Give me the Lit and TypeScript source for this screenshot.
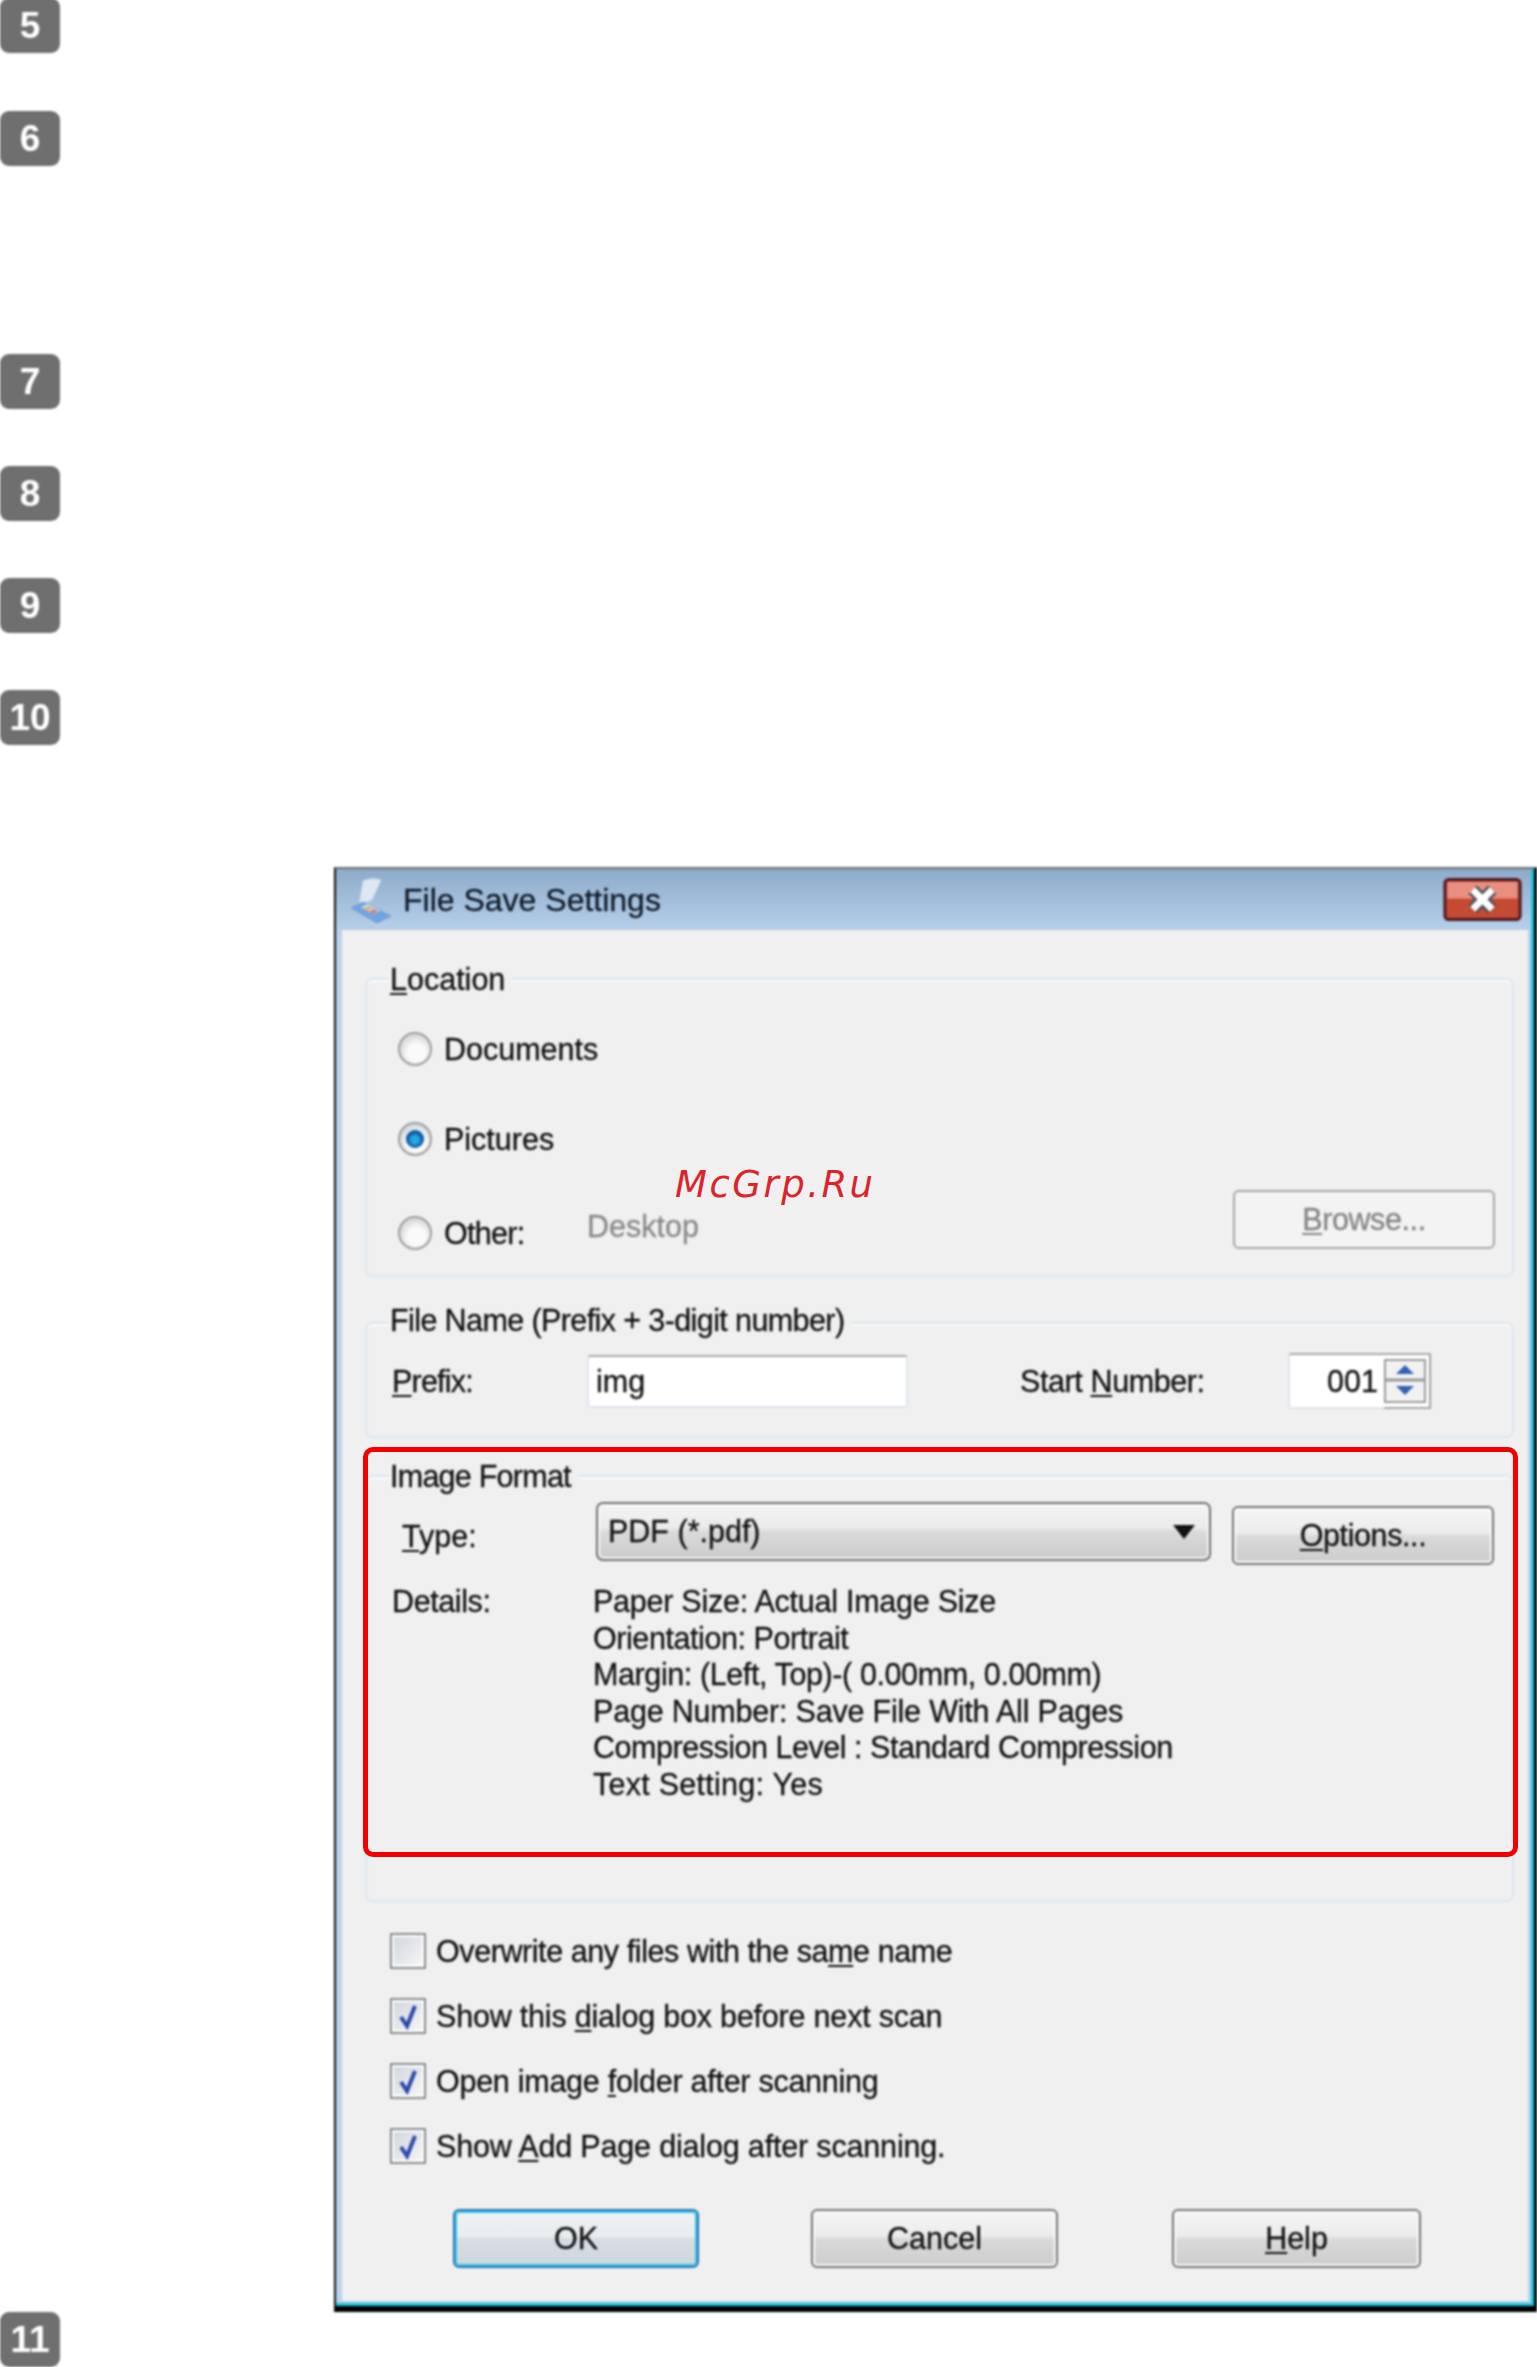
import { LitElement, html, css, svg } from "lit";
import { customElement } from "lit/decorators.js";

const TOP_STEPS = [
  { n: "5", gap: 0 },
  { n: "6", gap: 58 },
  { n: "7", gap: 188 },
  { n: "8", gap: 57 },
  { n: "9", gap: 57 },
  { n: "10", gap: 57 },
];

const DETAILS = [
  { t: "Paper Size: Actual Image Size", ls: -0.25 },
  { t: "Orientation: Portrait", ls: -0.43 },
  { t: "Margin: (Left, Top)-( 0.00mm, 0.00mm)", ls: -0.4 },
  { t: "Page Number: Save File With All Pages", ls: -0.2 },
  { t: "Compression Level : Standard Compression", ls: -0.47 },
  { t: "Text Setting: Yes", ls: 0.26 },
];

@customElement("app-root")
export class AppRoot extends LitElement {
  static styles = css`
    :host {
      display: block;
      width: 1537px;
      height: 2367px;
      overflow: hidden;
      background: #fff;
      font-family: "Liberation Sans", Arial, sans-serif;
      font-size: 30.5px;
      color: #111;
    }
    .page { display: flex; flex-direction: column; margin-top: -2px; }
    .badge {
      width: 60px;
      height: 55px;
      flex: none;
      box-sizing: border-box;
      background: #6f6f6f;
      border-radius: 9px;
      display: flex;
      align-items: center;
      justify-content: center;
      color: #fff;
      font: bold 37px/1 "Liberation Sans", Arial, sans-serif;
      filter: blur(0.8px);
    }
    .wrap {
      position: relative;
      margin: 122px 0 0 334px;
      width: 1203px;
      height: 1445px;
      flex: none;
    }
    .dialog {
      box-sizing: border-box;
      width: 100%;
      height: 100%;
      display: flex;
      flex-direction: column;
      border-top: 2px solid #707070;
      border-left: 2px solid #111;
      border-right: 3px solid #000;
      border-bottom: 6px solid #000;
      background: #b8d2ee;
      filter: blur(0.8px);
      -webkit-text-stroke: 0.3px currentColor;
    }
    .inner {
      flex: 1;
      display: flex;
      flex-direction: column;
      min-height: 0;
      border-right: 3px solid #18c4de;
      border-bottom: 3px solid #18c4de;
    }
    .titlebar {
      height: 61px;
      flex: none;
      display: flex;
      align-items: center;
      background: linear-gradient(#8dabca, #b6d0ea);
      font-size: 32px;
      color: #111c28;
      padding: 0 9px 0 12px;
    }
    .title-icon { width: 44px; height: 48px; flex: none; margin-right: 11px; }
    .title-text { flex: 1; padding-top: 2px; }
    .close { width: 79px; height: 43px; flex: none; display: block; }
    .client {
      flex: 1;
      margin: 0 3px 2px 6px;
      background: #f0f0f0;
      padding: 48px 14px 0 23px;
      display: flex;
      flex-direction: column;
      min-height: 0;
    }
    .group {
      box-sizing: border-box;
      flex: none;
      border: 2px solid #dde6ee;
      border-radius: 7px;
      box-shadow: inset 0 2px 0 #fbfbfb;
      display: flex;
      flex-direction: column;
      padding: 0 17px 0 25px;
    }
    .legend {
      align-self: flex-start;
      height: 36px;
      line-height: 36px;
      margin: -19px 0 0 -3px;
      padding: 0 6px 0 1px;
      background: #f0f0f0;
    }
    .g-location { height: 299px; }
    .g-name { height: 116px; margin-top: 45px; }
    .g-name .legend { margin-top: -22px; letter-spacing: -0.6px; }
    .g-format { height: 427px; margin-top: 37px; }
    .g-format .legend { letter-spacing: -0.75px; }
    .radio-row { display: flex; align-items: center; gap: 12px; height: 34px; padding-left: 6px; }
    .r1 { margin-top: 35px; }
    .r2 { margin-top: 56px; }
    .r3 { margin-top: 60px; }
    .radio {
      width: 34px;
      height: 34px;
      flex: none;
      box-sizing: border-box;
      border-radius: 50%;
      border: 2px solid #9d9d9d;
      background: radial-gradient(circle at 55% 62%, #fafafa 0 35%, #d5d7da 70%, #e6e6e6 100%);
      display: flex;
      align-items: center;
      justify-content: center;
    }
    .dot {
      width: 18px;
      height: 18px;
      border-radius: 50%;
      background: radial-gradient(circle at 50% 55%, #27a7e6 0 25%, #0a5da6 55%, #1d3a5c 100%);
    }
    .other-label { width: 131px; flex: none; letter-spacing: -0.7px; }
    .desktop { color: #8a8a8a; margin-bottom: 14px; }
    .spacer { flex: 1; }
    .btn {
      box-sizing: border-box;
      flex: none;
      display: flex;
      align-items: center;
      justify-content: center;
      border: 2px solid #747474;
      border-radius: 6px;
      background: linear-gradient(#f5f5f5 0, #ececec 45%, #d9d9d9 52%, #cdcdcd 100%);
      box-shadow: inset 0 0 0 2px #fafafa;
    }
    .browse {
      width: 262px;
      height: 59px;
      margin-bottom: 28px;
      border-color: #a6a6a6;
      background: #f3f3f3;
      color: #858585;
      box-shadow: none;
      letter-spacing: -0.4px;
    }
    .name-row { display: flex; align-items: center; height: 56px; margin-top: 15px; }
    .lbl-prefix { width: 195px; flex: none; letter-spacing: -0.8px; }
    .input {
      box-sizing: border-box;
      width: 321px;
      height: 53px;
      flex: none;
      background: #fff;
      border: 2px solid #dfe6ee;
      border-top-color: #a9a9a9;
      border-radius: 3px;
      padding: 0 7px;
      display: flex;
      align-items: center;
    }
    .lbl-start { width: 268px; flex: none; margin-left: 112px; letter-spacing: -0.4px; }
    .spin {
      display: flex;
      width: 144px;
      height: 56px;
      flex: none;
      box-sizing: border-box;
      background: #fff;
      border: 2px solid #dfe6ee;
      border-top-color: #a9a9a9;
      border-radius: 3px;
    }
    .spin-val { flex: 1; display: flex; align-items: center; justify-content: flex-end; padding-right: 6px; }
    .spin-arrows { width: 48px; height: 56px; flex: none; margin: -2px -2px 0 0; display: block; }
    .type-row { display: flex; align-items: flex-start; margin-top: 8px; }
    .lbl-type { width: 194px; flex: none; margin: 16px 0 0 10px; line-height: 36px; }
    .combo {
      box-sizing: border-box;
      width: 615px;
      height: 59px;
      flex: none;
      display: flex;
      align-items: center;
      justify-content: space-between;
      padding: 0 14px 0 10px;
      border: 2px solid #6e6e6e;
      border-radius: 7px;
      background: linear-gradient(#f4f4f4 0, #ebebeb 42%, #dadada 52%, #cbcbcb 100%);
      box-shadow: inset 0 0 0 2px #f8f8f8;
    }
    .combo-arrow { width: 22px; height: 14px; flex: none; display: block; }
    .options { width: 262px; height: 59px; margin: 4px 0 0 21px; letter-spacing: -0.4px; }
    .detail-row { display: flex; margin-top: 18px; line-height: 36.6px; }
    .lbl-details { width: 201px; flex: none; letter-spacing: -0.4px; }
    .check-list { display: flex; flex-direction: column; gap: 29px; margin: 31px 0 0 25px; }
    .check-row { display: flex; align-items: center; gap: 10px; height: 36px; }
    .check {
      box-sizing: border-box;
      width: 36px;
      height: 36px;
      flex: none;
      border: 2px solid #8b8b8b;
      box-shadow: inset 0 0 0 2px #fff;
      background: linear-gradient(135deg, #cfd5dc, #f7f7f7);
      display: flex;
      align-items: center;
      justify-content: center;
    }
    .check svg { width: 24px; height: 28px; display: block; }
    .buttons { display: flex; margin: 45px 0 0 88px; }
    .buttons .btn { height: 59px; }
    .ok {
      width: 246px;
      border-color: #2a74b5;
      background: linear-gradient(#f0f3f4 0, #e9edef 45%, #d6dde3 52%, #cfd8de 100%);
      box-shadow: inset 0 0 0 2px #35c6ee;
    }
    .cancel { width: 247px; margin-left: 112px; }
    .help { width: 249px; margin-left: 114px; }
    .redbox {
      position: absolute;
      left: 29px;
      top: 580px;
      width: 1155px;
      height: 410px;
      box-sizing: border-box;
      border: 5px solid #f50000;
      border-radius: 10px;
    }
    .mark {
      position: absolute;
      left: 341px;
      top: 295px;
      font: italic 37px/46px "DejaVu Sans", sans-serif;
      letter-spacing: 2.5px;
      color: #d9252b;
    }
    u { text-underline-offset: 3px; text-decoration-thickness: 2px; }
  `;

  private badge(n: string, gap: number) {
    return html`<div class="badge" style="margin-top:${gap}px">${n}</div>`;
  }

  private check(on: boolean, ls: number, label: unknown) {
    return html`<div class="check-row">
      <span class="check">${on
        ? html`<svg viewBox="0 0 24 28"><path d="M5 15 L11 24 L19 4" fill="none" stroke="#2b49ad" stroke-width="4"/></svg>`
        : ""}</span>
      <span style="letter-spacing:${ls}px">${label}</span>
    </div>`;
  }

  private radio(on: boolean) {
    return html`<span class="radio">${on ? html`<span class="dot"></span>` : ""}</span>`;
  }

  render() {
    return html`<div class="page">
      ${TOP_STEPS.map((s) => this.badge(s.n, s.gap))}
      <div class="wrap">
        <div class="dialog">
          <div class="inner">
            <div class="titlebar">
              <svg class="title-icon" viewBox="0 0 44 48">
                <path d="M15 5 Q24 1 33 4 L24 24 L11 29 Z" fill="#dfe8f2" stroke="#c8d6e6"/>
                ${svg`<path d="M3 32 L15 26 L43 40 L29 47 Z" fill="#6ea6e4" stroke="#7c9cc4"/>
                <path d="M13 31 L20 28 L32 35 L25 38 Z" fill="#c4e0f6"/>
                <path d="M15 33 L21 30 L25 32 L19 35 Z" fill="#e2b060"/>
                <path d="M21 36 L26 33 L30 35 L25 38 Z" fill="#d87a7a"/>`}
              </svg>
              <span class="title-text">File Save Settings</span>
              <svg class="close" viewBox="0 0 80 44">
                <rect x="1.5" y="1.5" width="77" height="41" rx="4" fill="#c44a32" stroke="#4c1a22" stroke-width="3"/>
                <rect x="4" y="4" width="72" height="17" fill="#e88f80"/>
                <path d="M30 12 L50 32 M50 12 L30 32" stroke="#46505e" stroke-width="12"/>
                <path d="M30 12 L50 32 M50 12 L30 32" stroke="#fff" stroke-width="7"/>
              </svg>
            </div>
            <div class="client">
              <div class="group g-location">
                <div class="legend"><u>L</u>ocation</div>
                <div class="radio-row r1">${this.radio(false)}<span>Documents</span></div>
                <div class="radio-row r2">${this.radio(true)}<span>Pictures</span></div>
                <div class="radio-row r3">
                  ${this.radio(false)}
                  <span class="other-label">Other:</span>
                  <span class="desktop">Desktop</span>
                  <span class="spacer"></span>
                  <div class="btn browse"><span><u>B</u>rowse...</span></div>
                </div>
              </div>
              <div class="group g-name">
                <div class="legend">File Name (Prefix + 3-digit number)</div>
                <div class="name-row">
                  <span class="lbl-prefix"><u>P</u>refix:</span>
                  <div class="input">img</div>
                  <span class="lbl-start">Start <u>N</u>umber:</span>
                  <div class="spin">
                    <span class="spin-val">001</span>
                    <svg class="spin-arrows" viewBox="0 0 48 56">
                      <path d="M46 1 V55 H0" fill="none" stroke="#a5a5a5" stroke-width="2"/>
                      <rect x="1" y="7" width="40" height="42" fill="#f2f2f2" stroke="#9a9a9a" stroke-width="2"/>
                      <path d="M1 27 H41" stroke="#9a9a9a" stroke-width="3"/>
                      <path d="M21 12 L30 21 H12 Z" fill="#2f62b5"/>
                      <path d="M12 33 H30 L21 42 Z" fill="#2f62b5"/>
                    </svg>
                  </div>
                </div>
              </div>
              <div class="group g-format">
                <div class="legend">Image Format</div>
                <div class="type-row">
                  <span class="lbl-type"><u>T</u>ype:</span>
                  <div class="combo">
                    <span>PDF (*.pdf)</span>
                    <svg class="combo-arrow" viewBox="0 0 22 14"><path d="M0 0 H22 L11 14 Z" fill="#111"/></svg>
                  </div>
                  <div class="btn options"><span><u>O</u>ptions...</span></div>
                </div>
                <div class="detail-row">
                  <span class="lbl-details">Details:</span>
                  <div>${DETAILS.map((d) => html`<div style="letter-spacing:${d.ls}px">${d.t}</div>`)}</div>
                </div>
              </div>
              <div class="check-list">
                ${this.check(false, -0.42, html`Overwrite any files with the sa<u>m</u>e name`)}
                ${this.check(true, -0.2, html`Show this <u>d</u>ialog box before next scan`)}
                ${this.check(true, -0.27, html`Open image <u>f</u>older after scanning`)}
                ${this.check(true, -0.17, html`Show <u>A</u>dd Page dialog after scanning.`)}
              </div>
              <div class="buttons">
                <div class="btn ok">OK</div>
                <div class="btn cancel">Cancel</div>
                <div class="btn help"><span><u>H</u>elp</span></div>
              </div>
            </div>
          </div>
        </div>
        <div class="redbox"></div>
        <div class="mark">McGrp.Ru</div>
      </div>
      ${this.badge("11", 0)}
    </div>`;
  }
}
